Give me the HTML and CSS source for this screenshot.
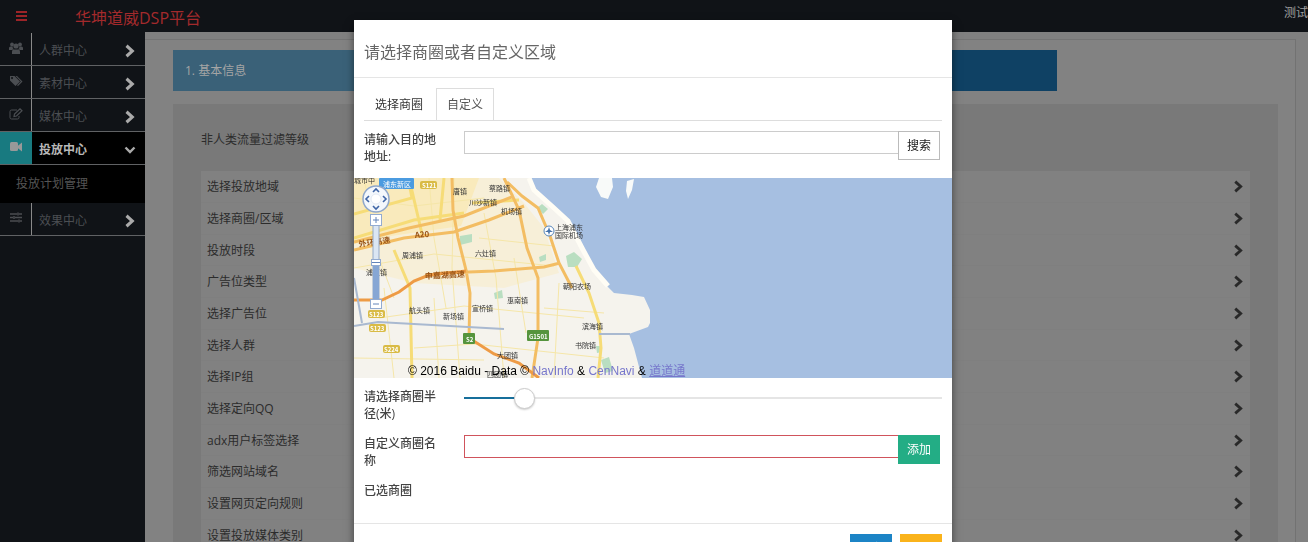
FILE: index.html
```html
<!DOCTYPE html>
<html lang="zh-CN">
<head>
<meta charset="utf-8">
<title>华坤道威DSP平台</title>
<link rel="stylesheet" href="styles.css">
</head>
<body>
<svg class="defs" aria-hidden="true">
  <symbol id="chev" viewBox="0 0 10 12"><path d="M2 1.500 7 6l-5 4.500" fill="none" stroke="currentColor" stroke-width="2.600"/></symbol>
  <symbol id="down" viewBox="0 0 12 10"><path d="M1.500 2.500 6 7l4.500-4.500" fill="none" stroke="currentColor" stroke-width="2.400"/></symbol>
</svg>
<header class="topbar">
  <button class="burger" type="button" aria-label="菜单"><i></i><i></i><i></i></button>
  <h1 class="brand">华坤道威DSP平台</h1>
  <span class="user">测试</span>
</header>
<div class="layout">
  <nav class="sidebar">
    <a class="nav" href="#"><span class="nav-icon"><svg width="14" height="12" viewBox="0 0 14 12" fill="currentColor"><circle cx="3" cy="2.500" r="1.900"/><circle cx="11" cy="2.500" r="1.900"/><circle cx="7" cy="4" r="2.600"/><path d="M0 8V6q0-1.500 1.500-1.500h2Q3.500 6.500 5 7.200 3.500 7.300 3 8zM14 8V6q0-1.500-1.500-1.500h-2Q10.500 6.500 9 7.200q1.500.1 2 .8zM3 12V9.500Q3 7.500 5 7.500h4q2 0 2 2V12z"/></svg></span><span class="nav-text">人群中心</span><svg class="arrow"><use href="#chev"/></svg></a>
    <a class="nav" href="#"><span class="nav-icon"><svg width="14" height="12" viewBox="0 0 14 12" fill="currentColor"><path fill-rule="evenodd" d="M1 1h4.500L11 6.500 6.500 11 1 5.500zM3 2a1 1 0 1 0 .1 0z"/><path d="M6.500 1H8l5.500 5.500L9 11l-1-.8 3.800-3.700z"/></svg></span><span class="nav-text">素材中心</span><svg class="arrow"><use href="#chev"/></svg></a>
    <a class="nav" href="#"><span class="nav-icon"><svg width="14" height="12" viewBox="0 0 14 12" fill="none" stroke="currentColor"><path d="M8 2H2.500Q1 2 1 3.500v6Q1 11 2.500 11h6Q10 11 10 9.500V8"/><path d="M5 8.500 5.500 6 11 .8 13 2.800 7.500 8z" stroke-width="1.200"/></svg></span><span class="nav-text">媒体中心</span><svg class="arrow"><use href="#chev"/></svg></a>
    <a class="nav active" href="#"><span class="nav-icon"><svg width="14" height="12" viewBox="0 0 14 12" fill="currentColor"><rect x="1" y="1" width="8" height="9" rx="1.500"/><path d="m8 5.500 5-4v9l-5-4z"/></svg></span><span class="nav-text">投放中心</span><svg class="arrow"><use href="#down"/></svg></a>
    <a class="subnav" href="#">投放计划管理</a>
    <a class="nav" href="#"><span class="nav-icon"><svg width="14" height="12" viewBox="0 0 14 12" fill="none" stroke="currentColor" stroke-width="1.500"><path d="M1 2h7M10 2h3M1 5.500h3M6 5.500h7M1 9h8M11 9h2M9 .5v3M5 4v3M10 7.500v3"/></svg></span><span class="nav-text">效果中心</span><svg class="arrow"><use href="#chev"/></svg></a>
  </nav>
  <main class="main">
    <div class="content">
      <ol class="steps"><li class="step done">1. 基本信息</li><li class="step"></li></ol>
      <section class="panel">
        <p class="filter">非人类流量过滤等级</p>
        <ul class="list">
          <li><a href="#">选择投放地域<svg><use href="#chev"/></svg></a></li>
          <li><a href="#">选择商圈/区域<svg><use href="#chev"/></svg></a></li>
          <li><a href="#">投放时段<svg><use href="#chev"/></svg></a></li>
          <li><a href="#">广告位类型<svg><use href="#chev"/></svg></a></li>
          <li><a href="#">选择广告位<svg><use href="#chev"/></svg></a></li>
          <li><a href="#">选择人群<svg><use href="#chev"/></svg></a></li>
          <li><a href="#">选择IP组<svg><use href="#chev"/></svg></a></li>
          <li><a href="#">选择定向QQ<svg><use href="#chev"/></svg></a></li>
          <li><a href="#">adx用户标签选择<svg><use href="#chev"/></svg></a></li>
          <li><a href="#">筛选网站域名<svg><use href="#chev"/></svg></a></li>
          <li><a href="#">设置网页定向规则<svg><use href="#chev"/></svg></a></li>
          <li><a href="#">设置投放媒体类别<svg><use href="#chev"/></svg></a></li>
        </ul>
      </section>
    </div>
  </main>
</div>

<div class="overlay">
  <div class="modal" role="dialog" aria-labelledby="dlg-title">
    <h2 class="modal-title" id="dlg-title">请选择商圈或者自定义区域</h2>
    <div class="tabs" role="tablist">
      <button class="tab" type="button" role="tab">选择商圈</button>
      <button class="tab selected" type="button" role="tab" aria-selected="true">自定义</button>
    </div>
    <div class="row">
      <label for="addr">请输入目的地地址:</label>
      <div class="group"><input class="field" id="addr" type="text"><button class="btn plain" type="button">搜索</button></div>
    </div>
    <div class="map">
      <svg class="map-art" viewBox="0 0 598 200" preserveAspectRatio="xMinYMin slice" role="img" aria-label="上海浦东地图">
        <rect width="598" height="200" fill="#a6bfe1"/>
        <path d="M0 0H175L180 14 197 29 213 42 220 55 229 72 239 91 250 105 260 115 278 117 290 119 296 132V145L294 149 275 156 280 170 288 200H0z" fill="#f5f3ed"/>
        <path d="M0 0H145L170 25 190 50 205 95 150 110 60 105 0 90z" fill="#f7efd8"/>
        <path d="M0 0h125l-18 48-70 10L0 66z" fill="#f9eabc"/>
        <path d="M175 0 180 12 200 30 214 43 228 70 240 92 254 108" fill="none" stroke="#fffdf5" stroke-width="5"/>
        <path d="M245 0h13l1 9-5 12-7-2-5-10zM273 3l7-2-2 11-4 9-2-8z" fill="#f8faf9"/>
        <g fill="#b9dec1"><path d="m212 78 8-4 8 7-5 8h-9zM106 58l12-2v8l-12 3zM183 30l5-4 6 5-5 5zM185 79l7-3v6l-6 2zM140 115l8-3 1 8-8 1zM247 182l8-3 4 14-8 2zM242 168l5 0 1 6-5 1z"/></g>
        <g fill="none" stroke="#f5e6a8" stroke-width="1">
          <path d="M0 20 60 28 130 20M10 0 25 80 40 120M75 0 80 60 92 130M100 0 98 90 106 200M130 35 142 100 150 200M0 90 80 76 200 88M25 140 110 128 230 140M60 170 120 166 250 180M125 60 200 68M30 110 40 200M80 120 85 200M160 80 172 155M205 105 200 200M190 130 250 135M0 180 130 182"/>
        </g>
        <g fill="none" stroke="#f6dc77" stroke-width="3">
          <path d="M0 36 58 20 54 0M55 0 68 56M90 0 86 42M40 72 56 110 58 200M222 88 235 115 245 145 247 170 244 200M118 25 165 22M0 60 60 42 110 35"/>
        </g>
        <g fill="none" stroke="#f3bd63" stroke-width="3">
          <path d="M0 64 55 50 110 38 160 18M98 0 99 32 104 60 112 92 116 115 115 160M0 72 50 60 100 54 135 42 170 28M71 98 90 95 140 93 190 89 206 85M150 0 165 32 173 70 184 100 184 160 178 200M153 4 168 18 184 30 196 58 205 85 218 110"/>
        </g>
        <path d="M0 122H28L45 114 60 103 75 97 112 93M115 160 140 176 165 185 185 200" fill="none" stroke="#ee9b45" stroke-width="3"/>
        <path d="M0 100 8 145M0 148 24 144 150 151M245 156H276" fill="none" stroke="#a9b9d0" stroke-width="2"/>
        <g fill="#d9bb45"><rect x="66" y="3" width="17" height="8" rx="2"/><rect x="14" y="132" width="17" height="8" rx="2"/><rect x="15" y="146" width="17" height="8" rx="2"/><rect x="29" y="167" width="17" height="8" rx="2"/></g>
        <g fill="#55943d"><rect x="109" y="155" width="12" height="11" rx="1"/><rect x="173" y="152" width="22" height="11" rx="1"/></g>
        <rect x="25" y="0" width="35" height="11" rx="1" fill="#4b9be0"/>
        <g class="shield"><text x="68" y="10">S121</text><text x="15" y="139">S123</text><text x="16" y="153">S123</text><text x="30" y="174">S224</text><text x="112" y="164">S2</text><text x="175" y="161">G1501</text><text x="29" y="9" class="district">浦东新区</text></g>
        <g class="places">
          <text x="0" y="5">城市中</text><text x="99" y="16">唐镇</text><text x="135" y="13">蔡路镇</text><text x="115" y="27">川沙新镇</text><text x="147" y="36">机场镇</text><text x="48" y="80">周浦镇</text><text x="121" y="78">六灶镇</text><text x="12" y="97">浦江镇</text><text x="153" y="125">惠南镇</text><text x="55" y="135">航头镇</text><text x="89" y="141">新场镇</text><text x="118" y="133">宣桥镇</text><text x="209" y="111">朝阳农场</text><text x="228" y="151">滨海镇</text><text x="221" y="170">书院镇</text><text x="143" y="180">大团镇</text><text x="133" y="199">四团镇</text><text x="201" y="52">上海浦东</text><text x="201" y="60">国际机场</text>
        </g>
        <g class="roads"><text x="5" y="69" transform="rotate(-8 5 69)">外环高速</text><text x="61" y="60" transform="rotate(-5 61 60)">A20</text><text x="71" y="101" transform="rotate(-3 71 101)">申嘉湖高速</text></g>
        <circle cx="195" cy="53" r="5" fill="#fff" stroke="#5585bb"/><path d="m195 49 1 3 3 2-3 0-1 3-1-3-3 0 3-2z" fill="#4271aa"/>
        <circle cx="22" cy="21" r="13" fill="#f3f7fc" stroke="#8fa7cb" stroke-width="1.500"/>
        <circle cx="22" cy="21" r="5" fill="#fff" stroke="#e3eaf4"/>
        <path d="m19 14 3-3 3 3M19 28l3 3 3-3M15 18l-3 3 3 3M29 18l3 3-3 3" fill="none" stroke="#3f65a6" stroke-width="1.600"/>
        <rect x="19" y="46" width="6" height="76" fill="#dbe6f3" stroke="#94a9c7"/>
        <rect x="19" y="88" width="6" height="34" fill="#86a6d4"/>
        <g fill="#fff" stroke="#93abd0"><rect x="16.500" y="36.500" width="11" height="11"/><rect x="16.500" y="121.500" width="11" height="9"/><rect x="17.500" y="81.500" width="9" height="6"/></g>
        <path d="M19 42h6M22 39v6M19 126h6M18 84.500h8" stroke="#6284b9"/>
      </svg>
      <p class="credit">© 2016 Baidu - Data © <a href="#">NavInfo</a> &amp; <a href="#">CenNavi</a> &amp; <a href="#">道道通</a></p>
    </div>
    <div class="row first">
      <label for="radius">请选择商圈半径(米)</label>
      <input class="slider" id="radius" type="range" min="0" max="100" value="11">
    </div>
    <div class="row">
      <label for="name">自定义商圈名称</label>
      <div class="group"><input class="field error" id="name" type="text"><button class="btn add" type="button">添加</button></div>
    </div>
    <div class="row last"><span class="label">已选商圈</span></div>
    <footer class="modal-foot">
      <button class="action ok" type="button">确定</button>
      <button class="action cancel" type="button">取消</button>
    </footer>
  </div>
</div>
</body>
</html>
```
FILE: styles.css
```css
* { box-sizing: border-box; }
html, body { height: 100%; }
body {
  margin: 0;
  overflow: hidden;
  display: flex;
  flex-direction: column;
  background: #808080;
  color: #2c2c2c;
  font: 12px/17px "Open Sans", "Noto Sans CJK SC", sans-serif;
}
h1, h2, p, ul, ol { margin: 0; padding: 0; font-weight: 400; }
ul, ol { list-style: none; }
a { color: inherit; text-decoration: none; }
button, input { font: inherit; margin: 0; border-radius: 0; }
.defs { position: absolute; width: 0; height: 0; }

.topbar { display: flex; flex: none; height: 32px; background: #101317; }
.burger { display: flex; flex-direction: column; gap: 2px; width: 75px; padding: 11px 16px; border: 0; background: none; }
.burger i { width: 11px; height: 2px; background: #9c2428; }
.brand { padding-top: 6px; font-size: 16px; line-height: 24px; color: #a32a2c; }
.user { margin-left: auto; padding-top: 4px; color: #a0a0a0; }

.layout { display: flex; flex: 1; min-height: 0; }
.sidebar { flex: none; width: 145px; padding-top: 1px; background: #101317; }
.nav { display: flex; align-items: center; height: 33px; border-bottom: 1px solid #606264; color: #4b4e52; }
.nav-icon { display: flex; align-items: flex-start; justify-content: center; align-self: stretch; width: 32px; padding-top: 9px; border-right: 1px solid #8a8a8a; }
.nav-text { flex: 1; padding: 3px 0 0 7px; }
.arrow { width: 12px; height: 14px; margin: 4px 9px 0 0; color: #aaa; }
.active { background: #000; color: #b8b8b8; font-weight: 700; }
.active .nav-icon { background: #187a80; color: #999; border-right-color: #187a80; }
.subnav { display: block; height: 38px; padding: 10px 16px; background: #000; color: #555; }

.main { flex: 1; min-width: 0; padding: 7px 12px 0 0; }
.content { height: 100%; padding: 10px 17px 0 28px; border-top: 1px solid #747474; border-right: 1px solid #727272; background: #828282; }
.steps { display: flex; width: 80%; height: 41px; }
.step { flex: 1; padding: 12px; background: #0f4164; color: #a5a5a5; }
.step.done { background: #3a6178; }
.panel { margin-top: 13px; padding: 27px 28px; background: #797979; }
.filter { padding-bottom: 23px; }
.list { background: #818181; }
.list li { height: 32px; border-bottom: 1px solid #7f7f7f; }
.list li:nth-child(3n) { height: 31px; }
.list a { display: flex; align-items: center; justify-content: space-between; height: 31px; padding: 0 6px; }
.list svg { width: 11px; height: 13px; color: #292929; }

.overlay { position: fixed; inset: 0; display: flex; justify-content: center; align-items: flex-start; padding: 20px 2px 0 0; overflow: hidden; }
.modal { width: 598px; background: #fff; color: #444; box-shadow: 0 4px 8px rgba(0, 0, 0, .5); }
.modal-title { padding: 20px 10px 13px; border-bottom: 1px solid #e5e5e5; font-size: 16px; line-height: 24px; color: #666; }
.tabs { display: flex; margin: 10px 10px; border-bottom: 1px solid #ddd; }
.tab { height: 32px; padding: 0 10px; border: 1px solid transparent; border-bottom: 0; background: none; color: #333; }
.tab:first-child { padding-right: 12px; }
.tab.selected { border-color: #ddd; color: #555; }
.row { display: flex; min-height: 34px; margin: 0 10px 13px; }
.row.first { margin-top: 10px; }
.row.last { margin-bottom: 7px; }
.row label, .label { flex: none; width: 76px; margin-right: 24px; font-weight: 500; }
.group { display: flex; flex: 1; align-items: flex-start; padding-right: 2px; }
.field { flex: 1; min-width: 0; height: 23px; padding: 0 6px; border: 1px solid #ccc; border-right: 0; outline: 0; background: #fff; }
.field.error { border-color: #d0545c; }
.btn { width: 42px; height: 29px; padding: 0; border: 1px solid #bbb; background: #fff; color: #222; }
.btn.add { border-color: #23ad85; background: #23ad85; color: #fff; }
.map { position: relative; }
.map-art { display: block; width: 100%; height: 200px; }
.map-art text { font-family: "Noto Sans CJK SC", sans-serif; }
.places { font-size: 7px; fill: #333; }
.roads { font-size: 8px; font-weight: 700; fill: #9a5518; }
.shield { font-size: 6px; font-weight: 700; fill: #fff; }
.shield .district { font-size: 7px; font-weight: 400; }
.credit { position: absolute; left: 54px; bottom: -2px; color: #000; font-family: "Liberation Sans", "Noto Sans CJK SC", sans-serif; }
.credit a { color: #7777cc; text-decoration: none; }
.credit a:last-child { text-decoration: underline; }
.slider { appearance: none; flex: 1; min-width: 0; height: 20px; background: linear-gradient(90deg, #176f9b 13%, #e5e5e5 13%) center / 100% 2px no-repeat; }
.slider::-webkit-slider-thumb { appearance: none; width: 21px; height: 21px; border: 1px solid #ccc; border-radius: 50%; background: #fff; box-shadow: 0 1px 2px rgba(0, 0, 0, .2); }
.modal-foot { display: flex; justify-content: flex-end; gap: 8px; padding: 10px; border-top: 1px solid #e5e5e5; }
.action { width: 42px; height: 29px; padding: 0; border: 0; color: #fff; }
.ok { background: #1c84c6; }
.cancel { background: #fab31b; }
```
